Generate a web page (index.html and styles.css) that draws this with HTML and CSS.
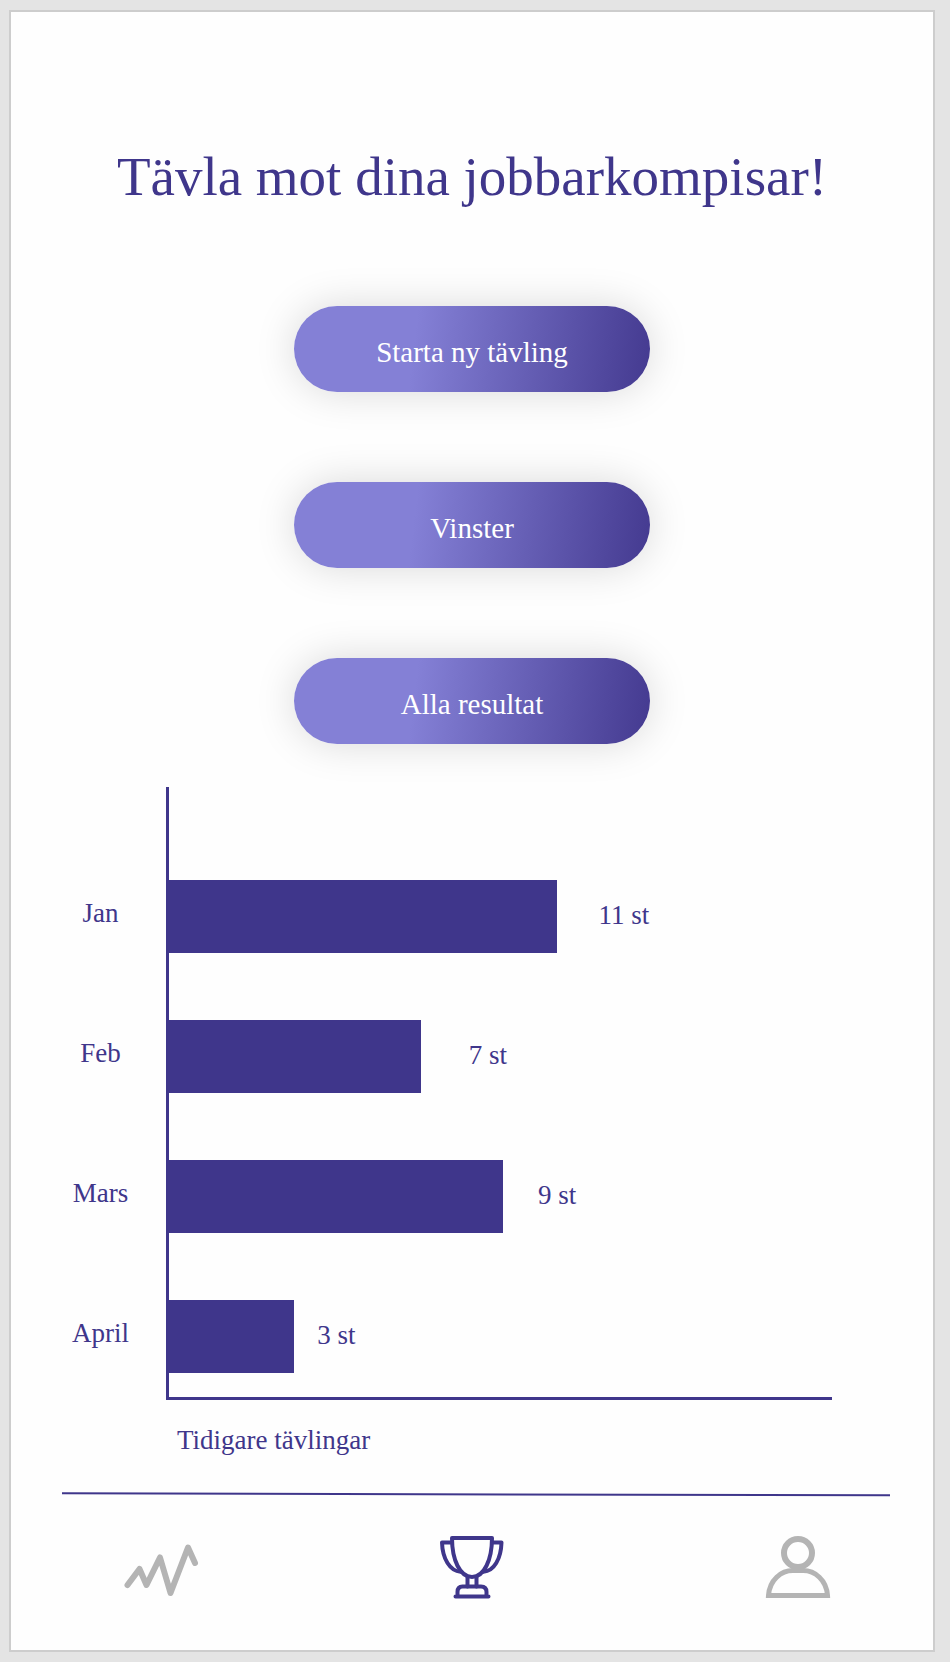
FILE: index.html
```
<!DOCTYPE html>
<html lang="sv">
<head>
<meta charset="utf-8">
<meta name="viewport" content="width=device-width, initial-scale=1">
<title>Tävla</title>
<link rel="stylesheet" href="styles.css">
</head>
<body>
<main class="screen">
  <h1 class="title">Tävla mot dina jobbarkompisar!</h1>
  <div class="actions">
    <button class="action" type="button">Starta ny tävling</button>
    <button class="action" type="button">Vinster</button>
    <button class="action" type="button">Alla resultat</button>
  </div>
  <figure class="chart">
    <div class="chart-body">
      <div class="months">
        <span class="month">Jan</span>
        <span class="month">Feb</span>
        <span class="month">Mars</span>
        <span class="month">April</span>
      </div>
      <div class="plot">
        <div class="row"><div class="bar" style="width:58.5%"></div><span class="value value-wide">11 st</span></div>
        <div class="row"><div class="bar" style="width:38%"></div><span class="value value-wide">7 st</span></div>
        <div class="row"><div class="bar" style="width:50.4%"></div><span class="value value-medium">9 st</span></div>
        <div class="row"><div class="bar" style="width:18.9%"></div><span class="value value-narrow">3 st</span></div>
      </div>
    </div>
    <figcaption class="caption">Tidigare tävlingar</figcaption>
  </figure>
  <svg class="divider" viewBox="0 0 828 5" preserveAspectRatio="none" aria-hidden="true"><path d="M0 1.3L828 3.3"/></svg>
  <nav class="tabs">
    <a class="tab" href="#aktivitet" aria-label="Aktivitet">
      <svg class="icon" viewBox="0 0 108 64"><path class="zigzag" d="M35.5 49L47.5 33L54.5 49L68 21.5L78.5 57L96 11.5L103 27"/></svg>
    </a>
    <a class="tab tab-active" href="#tavling" aria-label="Tävling" aria-current="page">
      <svg class="icon" viewBox="0 0 108 64"><g class="trophy"><path d="M34 2H74C74 24 66 41 54 41C42 41 34 24 34 2Z"/><path d="M34 6.5H24C24.500 23 32 35 42.500 35.800M74 6.500H83.500C83 23 76 35 65.500 35.800"/><path d="M49.500 41V50.500M58.500 41V50.500"/><path d="M39.500 60.500V56Q39.500 50.500 44.500 50.500H63Q68.500 50.500 68.500 56V60.500M37.500 60.500H70.500"/></g></svg>
    </a>
    <a class="tab" href="#profil" aria-label="Profil">
      <svg class="icon" viewBox="0 0 108 64"><circle class="head" cx="54" cy="17" r="14"/><path class="shoulders" d="M24.5 59.5H83.5C82.5 44 71 34.5 59 34.5H49C37 34.5 25.5 44 24.5 59.5Z"/></svg>
    </a>
  </nav>
</main>
</body>
</html>
```
FILE: styles.css
```
* {
  box-sizing: border-box;
}

body {
  --ink: #3f368b;
  margin: 0;
  padding: 10px 15px 10px 9px;
  background: #e4e4e4;
  color: var(--ink);
  font-family: "Liberation Serif", "Times New Roman", serif;
  font-size: 27px;
  line-height: 32px;
}

.screen {
  padding: 133px 0 50px;
  border: 2px solid #cdcdcd;
  background: #fefefe;
}

.title {
  margin: 0 0 97px;
  font-size: 55px;
  font-weight: 400;
  line-height: 64px;
  text-align: center;
}

.actions {
  display: flex;
  flex-direction: column;
  align-items: center;
  gap: 90px;
}

.action {
  width: 356px;
  height: 86px;
  padding: 6px 0 0;
  border: 0;
  border-radius: 43px;
  background: linear-gradient(97deg, #8480d6 34%, #463c92 98%);
  box-shadow: 0 0 40px rgba(0, 0, 0, 0.15);
  color: #fff;
  font-family: inherit;
  font-size: 29px;
  line-height: 32px;
}

.chart {
  margin: 43px 0 36px;
  padding: 0 101px 0 47px;
}

.chart-body {
  display: flex;
}

.months {
  display: flex;
  flex-direction: column;
  gap: 67px;
  width: 108px;
  padding: 93px 23px 0 0;
}

.month {
  height: 73px;
  line-height: 67px;
  text-align: center;
}

.plot {
  display: flex;
  flex: 1;
  flex-direction: column;
  gap: 67px;
  padding: 93px 0 24px;
  border-left: 3px solid var(--ink);
  border-bottom: 3px solid var(--ink);
}

.row {
  display: flex;
  height: 73px;
}

.bar {
  background: var(--ink);
}

.value {
  line-height: 70px;
  text-align: center;
}

.value-wide {
  width: 134px;
}

.value-medium {
  width: 108px;
}

.value-narrow {
  width: 84px;
}

.caption {
  padding: 24px 0 0 119px;
}

.divider {
  display: block;
  width: calc(100% - 94px);
  height: 5px;
  margin: 0 auto 0 51px;
  overflow: visible;
}

.divider path {
  stroke: var(--ink);
  stroke-width: 2;
}

.tabs {
  display: flex;
  justify-content: space-between;
  padding: 39px 81px 0;
}

.tab {
  display: block;
  color: #b4b4b4;
}

.tab-active {
  color: var(--ink);
}

.icon {
  display: block;
  width: 108px;
  height: 64px;
  fill: none;
  stroke: currentColor;
}

.zigzag {
  stroke-width: 6;
  stroke-linecap: round;
  stroke-linejoin: round;
}

.trophy {
  stroke-width: 4;
  stroke-linecap: round;
  stroke-linejoin: round;
}

.head {
  stroke-width: 6;
}

.shoulders {
  stroke-width: 5;
}
```
